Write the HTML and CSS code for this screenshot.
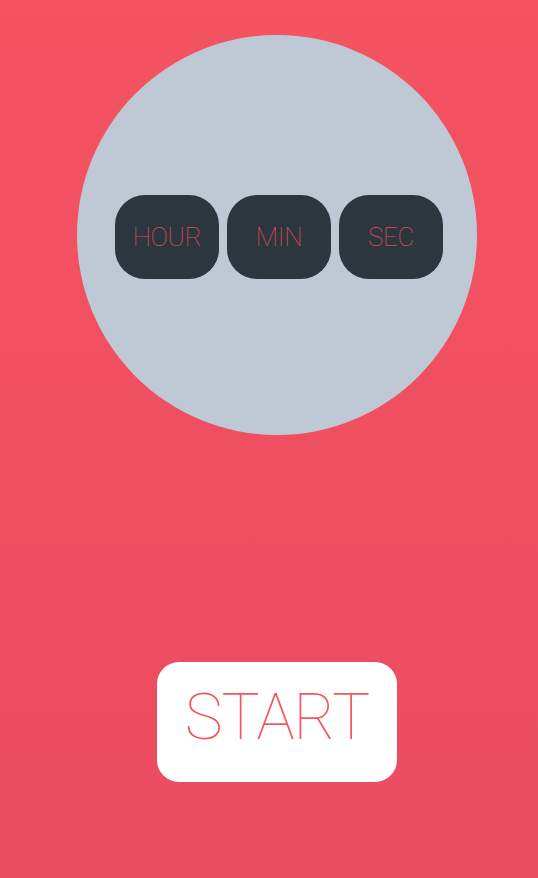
FILE: index.html
```html
<!DOCTYPE html>
<html>
<head>
<meta charset="utf-8">
<link rel="stylesheet" href="styles.css">
</head>
<body>
<div class="page">
  <div class="dial">
    <div class="units">
      <div class="unit">HOUR</div>
      <div class="unit">MIN</div>
      <div class="unit">SEC</div>
    </div>
  </div>
  <div class="start">START</div>
</div>
</body>
</html>
```

FILE: styles.css
```css
html, body {
  margin: 0;
  padding: 0;
  height: 100%;
}
body {
  font-family: Roboto, "Liberation Sans", sans-serif;
  font-weight: 100;
}
.page {
  height: 878px;
  background: linear-gradient(to bottom, #f45360, #ea4c62);
  display: flex;
  flex-direction: column;
  align-items: center;
  padding-left: 16px;
  box-sizing: border-box;
  padding-top: 35px;
}
.dial {
  width: 400px;
  height: 400px;
  border-radius: 50%;
  background: #bfc9d6;
  display: flex;
  align-items: center;
  justify-content: center;
}
.units {
  display: flex;
  gap: 8px;
  margin-left: 4px;
  margin-top: 4px;
}
.unit {
  width: 104px;
  height: 84px;
  border-radius: 30px;
  background: #2c363e;
  color: #e94b5a;
  font-size: 26px;
  display: flex;
  align-items: center;
  justify-content: center;
  letter-spacing: -0.3px;
}
.start {
  margin-top: 227px;
  width: 240px;
  height: 120px;
  border-radius: 22px;
  background: #ffffff;
  color: #f4565f;
  font-size: 64px;
  display: flex;
  align-items: center;
  justify-content: center;
  letter-spacing: -1px;
  box-sizing: border-box;
  padding-bottom: 10px;
}
```
